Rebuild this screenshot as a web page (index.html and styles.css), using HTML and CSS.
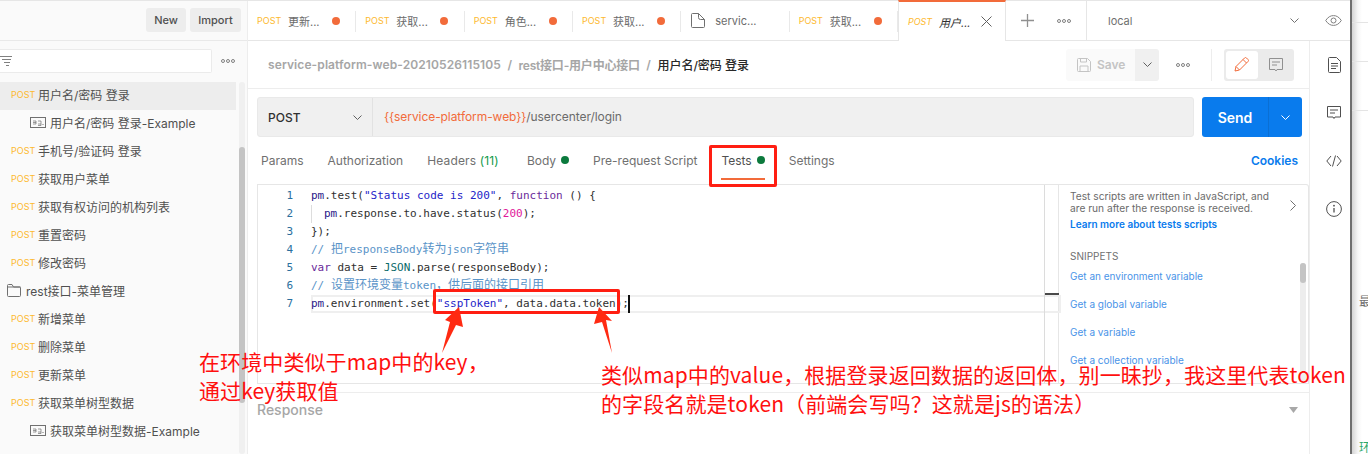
FILE: index.html
```html
<!DOCTYPE html>
<html lang="zh-CN">
<head>
<meta charset="utf-8">
<title>Postman</title>
<link rel="stylesheet" href="styles.css">
</head>
<body>
<div class="window">
  <div class="app">
    <aside class="sidebar">
      <div class="side-head">
        <button class="head-btn new">New</button>
        <button class="head-btn">Import</button>
      </div>
      <div class="side-filter">
        <div class="filter-box">
          <svg class="filter-icon" width="13" height="12" viewBox="0 0 13 12"><path d="M0 1.5h12M2 4.500h9M4 7.500h6M6 10.500h3" stroke="#808080" fill="none"/></svg>
        </div>
        <svg class="dots" width="14" height="4" viewBox="0 0 14 4"><circle cx="2" cy="2" r="1.500"/><circle cx="7" cy="2" r="1.500"/><circle cx="12" cy="2" r="1.500"/></svg>
      </div>
      <div class="side-body">
        <ul class="tree">
          <li class="row selected"><span class="verb">POST</span><span>用户名/密码 登录</span></li>
          <li class="row example"><svg class="eg" width="16" height="11" viewBox="0 0 16 11"><rect x=".5" y=".5" width="15" height="10" fill="none" stroke="#707070"/><path d="M3 5.500h3M3 4h3v3H3M8 4h3v3H8M11 7v1.500H8" stroke="#707070" fill="none" stroke-width=".7"/><rect x="12.500" y="7" width="1" height="1" fill="#707070"/></svg><span>用户名/密码 登录-Example</span></li>
          <li class="row"><span class="verb">POST</span><span>手机号/验证码 登录</span></li>
          <li class="row"><span class="verb">POST</span><span>获取用户菜单</span></li>
          <li class="row"><span class="verb">POST</span><span>获取有权访问的机构列表</span></li>
          <li class="row"><span class="verb">POST</span><span>重置密码</span></li>
          <li class="row"><span class="verb">POST</span><span>修改密码</span></li>
          <li class="row folder"><svg width="14" height="13" viewBox="0 0 14 13"><path d="M.5 3V1.500a1 1 0 0 1 1-1h3.500l1.500 2.500h6a1 1 0 0 1 1 1v7.500a1 1 0 0 1-1 1h-11a1 1 0 0 1-1-1V3h13" fill="none" stroke="#707070"/></svg><span>rest接口-菜单管理</span></li>
          <li class="row"><span class="verb">POST</span><span>新增菜单</span></li>
          <li class="row"><span class="verb">POST</span><span>删除菜单</span></li>
          <li class="row"><span class="verb">POST</span><span>更新菜单</span></li>
          <li class="row"><span class="verb">POST</span><span>获取菜单树型数据</span></li>
          <li class="row example"><svg class="eg" width="16" height="11" viewBox="0 0 16 11"><rect x=".5" y=".5" width="15" height="10" fill="none" stroke="#707070"/><path d="M3 5.500h3M3 4h3v3H3M8 4h3v3H8M11 7v1.500H8" stroke="#707070" fill="none" stroke-width=".7"/><rect x="12.500" y="7" width="1" height="1" fill="#707070"/></svg><span>获取菜单树型数据-Example</span></li>
        </ul>
        <div class="side-scroll"><div class="side-thumb"></div></div>
      </div>
    </aside>

    <main class="main">
      <nav class="tabs">
        <div class="tab"><span class="verb">POST</span><span class="tab-name">更新...</span><i class="dirty"></i></div>
        <div class="tab"><span class="verb">POST</span><span class="tab-name">获取...</span><i class="dirty"></i></div>
        <div class="tab"><span class="verb">POST</span><span class="tab-name">角色...</span><i class="dirty"></i></div>
        <div class="tab"><span class="verb">POST</span><span class="tab-name">获取...</span><i class="dirty"></i></div>
        <div class="tab"><svg class="doc-tab" width="14" height="15" viewBox="0 0 14 15"><path d="M.5 1.500a1 1 0 0 1 1-1h6l6 6v7a1 1 0 0 1-1 1h-11a1 1 0 0 1-1-1zM7.500.5v4a2 2 0 0 0 2 2h4" fill="none" stroke="#707070"/></svg><span class="tab-name doc-name">servic...</span></div>
        <div class="tab"><span class="verb">POST</span><span class="tab-name">获取...</span><i class="dirty"></i></div>
        <div class="tab active"><span class="verb">POST</span><span class="tab-name">用户...</span><svg class="tab-close" width="11" height="11" viewBox="0 0 11 11"><path d="M.5.5l10 10M10.500.5l-10 10" stroke="#606060" fill="none"/></svg></div>
        <div class="tab-add"><svg width="13" height="13" viewBox="0 0 13 13"><path d="M6.500 0v13M0 6.500h13" stroke="#909090" stroke-width="1.300" fill="none"/></svg><svg class="dots" width="14" height="4" viewBox="0 0 14 4"><circle cx="2" cy="2" r="1.500"/><circle cx="7" cy="2" r="1.500"/><circle cx="12" cy="2" r="1.500"/></svg></div>
        <div class="env"><span>local</span><svg width="9" height="5" viewBox="0 0 9 5"><path d="M.5.5l4 4 4-4" stroke="#707070" fill="none"/></svg></div>
        <div class="eye"><svg width="17" height="11" viewBox="0 0 17 11"><path d="M.7 5.500C3 2 5.500.6 8.500.6s5.500 1.400 7.800 4.900c-2.300 3.500-4.800 4.900-7.800 4.900S3 9 .7 5.500z" fill="none" stroke="#808080"/><circle cx="8.500" cy="5.500" r="2.500" fill="none" stroke="#808080"/></svg></div>
      </nav>

      <div class="workspace">
        <section class="content">
          <header class="crumbs">
            <div class="crumb-text"><span class="crumb-a">service-platform-web-20210526115105</span><span class="sep">/</span><span class="crumb-b">rest接口-用户中心接口</span><span class="sep">/</span><span class="current">用户名/密码 登录</span></div>
            <div class="save-group">
              <div class="save"><svg width="14" height="14" viewBox="0 0 14 14"><path d="M.5 1.500a1 1 0 0 1 1-1h9l3 3v9a1 1 0 0 1-1 1h-11a1 1 0 0 1-1-1zM3 13.500V8h8v5.500M3.500.5v3.500h6V.5" fill="none" stroke="#c4c4c4"/></svg><span>Save</span></div>
              <div class="save-more"><svg width="9" height="5" viewBox="0 0 9 5"><path d="M.5.5l4 4 4-4" stroke="#606060" fill="none"/></svg></div>
            </div>
            <svg class="dots crumb-dots" width="14" height="4" viewBox="0 0 14 4"><circle cx="2" cy="2" r="1.500"/><circle cx="7" cy="2" r="1.500"/><circle cx="12" cy="2" r="1.500"/></svg>
            <div class="mode">
              <div class="mode-btn on"><svg width="15" height="15" viewBox="0 0 15 15"><path d="M1 14l1-4.500L10.500 1a1.400 1.400 0 0 1 2 0l1.500 1.500a1.400 1.400 0 0 1 0 2L5.500 13zM2 9.500L5.500 13M9 2.500l3.500 3.500" fill="none" stroke="#f26b3a"/></svg></div>
              <div class="mode-btn"><svg width="14" height="14" viewBox="0 0 14 14"><path d="M.5.500h13v11H8l-1 1.500-1-1.500H.5zM3 4h8M3 7h5" fill="none" stroke="#909090"/></svg></div>
            </div>
          </header>

          <div class="url-row">
            <div class="url-box">
              <div class="method"><span>POST</span><svg width="9" height="5" viewBox="0 0 9 5"><path d="M.5.5l4 4 4-4" stroke="#606060" fill="none"/></svg></div>
              <div class="url"><span class="var">{{service-platform-web}}</span>/usercenter/login</div>
            </div>
            <div class="send"><span class="send-label">Send</span><span class="send-more"><svg width="9" height="5" viewBox="0 0 9 5"><path d="M.5.5l4 4 4-4" stroke="#fff" fill="none"/></svg></span></div>
          </div>

          <div class="req-tabs">
            <span class="rt">Params</span>
            <span class="rt">Authorization</span>
            <span class="rt rt-headers">Headers <em>(11)</em></span>
            <span class="rt">Body<i class="ok"></i></span>
            <span class="rt">Pre-request Script</span>
            <span class="rt rt-on">Tests<i class="ok"></i></span>
            <span class="rt">Settings</span>
            <span class="cookies">Cookies</span>
          </div>

          <div class="editor-wrap">
            <div class="editor">
              <div class="gutter"><span>1</span><span>2</span><span>3</span><span>4</span><span>5</span><span>6</span><span>7</span></div>
              <div class="code">
                <div class="ln"><b class="pm">pm</b>.test(<s class="str">"Status code is 200"</s>, <s class="kw">function</s> () {</div>
                <div class="ln in"><b class="pm">pm</b>.response.to.have.status(<s class="num">200</s>);</div>
                <div class="ln">});</div>
                <div class="ln cm">// <span class="zh">把</span>responseBody<span class="zh">转为</span>json<span class="zh">字符串</span></div>
                <div class="ln"><s class="kw">var</s> data = <s class="def">JSON</s>.parse(responseBody);</div>
                <div class="ln cm">// <span class="zh">设置环境变量</span>token<span class="zh">，供后面的接口引用</span></div>
                <div class="ln active"><b class="pm">pm</b>.environment.set(<s class="str">"sspToken"</s>, data.data.token);<i class="cursor"></i></div>
              </div>
              <div class="ruler"><i></i></div>
            </div>
            <aside class="help">
              <div class="help-top">
                <p>Test scripts are written in JavaScript, and are run after the response is received.</p>
                <svg width="6" height="11" viewBox="0 0 6 11"><path d="M.5.500l5 5-5 5" fill="none" stroke="#707070"/></svg>
              </div>
              <a class="learn">Learn more about tests scripts</a>
              <h4>SNIPPETS</h4>
              <div class="snips">
                <a>Get an environment variable</a>
                <a>Get a global variable</a>
                <a>Get a variable</a>
                <a>Get a collection variable</a>
                <a>Set an environment variable</a>
              </div>
              <div class="help-scroll"><div class="help-thumb"></div></div>
            </aside>
          </div>

          <div class="response"><span>Response</span><svg width="9" height="6" viewBox="0 0 9 6"><path d="M0 0h9L4.500 6z" fill="#a8a8a8"/></svg></div>
        </section>

        <aside class="rail">
          <svg width="13" height="16" viewBox="0 0 13 16"><path d="M.5 1.500a1 1 0 0 1 1-1h7l4 4v10a1 1 0 0 1-1 1h-10a1 1 0 0 1-1-1zM3 6.500h7M3 9h7M3 11.500h5" fill="none" stroke="#505050"/></svg>
          <svg width="14" height="14" viewBox="0 0 14 14"><path d="M.5.500h13v10.500H8l-1 1.500L6 11H.5zM3 4h8M3 7h5" fill="none" stroke="#505050"/></svg>
          <svg width="16" height="12" viewBox="0 0 16 12"><path d="M5 1L.8 6 5 11M11 1l4.200 5L11 11M9.500.5l-3 11" fill="none" stroke="#505050"/></svg>
          <svg width="16" height="16" viewBox="0 0 16 16"><circle cx="8" cy="8" r="7.400" fill="none" stroke="#505050"/><path d="M8 7v4.500" stroke="#505050" stroke-width="1.300"/><circle cx="8" cy="4.700" r=".9" fill="#505050"/></svg>
        </aside>
      </div>
    </main>
  </div>
  <div class="behind"><span class="b1">最</span><span class="b2">环</span></div>

  <div class="mark mark-tests"></div>
  <div class="mark mark-set"></div>
  <svg class="arrows" width="1368" height="454" viewBox="0 0 1368 454">
    <path d="M442 353L450 322 445 320 459 307 463 327 456 325z" fill="#ff2a12"/>
    <path d="M612 353L602 322 594 324 599 307 612 321 606 320z" fill="#ff2a12"/>
  </svg>
  <p class="note note-key">在环境中类似于map中的key，<br>通过key获取值</p>
  <p class="note note-value">类似map中的value，根据登录返回数据的返回体，别一昧抄，我这里代表token<br>的字段名就是token（前端会写吗？这就是js的语法）</p>
</div>
</body>
</html>
```
FILE: styles.css
```css
* { box-sizing: border-box; }
html, body { margin: 0; height: 454px; overflow: hidden; background: #fff; }
body { font-family: Inter, "Noto Sans CJK SC", sans-serif; font-size: 12px; color: #505050; }
ul, p, h4 { margin: 0; padding: 0; list-style: none; }
s, b, em, i { text-decoration: none; font-style: normal; font-weight: inherit; }

.window { position: relative; display: flex; width: 1368px; height: 454px; overflow: hidden; }
.app { display: flex; width: 1350px; height: 454px; border-top: 1px solid #e6e6e6; flex: none; }

.sidebar { width: 248px; flex: none; background: #fafafa; border-right: 1px solid #ededed; display: flex; flex-direction: column; }
.side-head { height: 40px; flex: none; display: flex; justify-content: flex-end; align-items: center; gap: 4px; padding: 0 6px 2px 0; border-bottom: 1px solid #e9e9e9; }
.head-btn { height: 24px; padding: 0 8px; border: 0; border-radius: 3px; background: #ededed; color: #505050; font: 500 11px Inter, sans-serif; }
.head-btn.new { width: 40px; }
.head-btn:not(.new) { width: 51px; }
.side-filter { height: 41px; flex: none; display: flex; align-items: center; gap: 9px; padding: 0 12px 1px 0; }
.filter-box { width: 213px; height: 24px; background: #fff; border: 1px solid #ebebeb; border-left: 0; border-radius: 0 2px 2px 0; display: flex; align-items: center; }
.dots { fill: none; stroke: #808080; flex: none; }
.dots circle { stroke-width: 1; }

.side-body { flex: 1; min-height: 0; display: flex; overflow: hidden; }
.tree { width: 236px; flex: none; }
.row { height: 28px; display: flex; align-items: center; padding: 0 0 3px 11px; white-space: nowrap; color: #505050; font-size: 12px; }
.row.selected { background: #ededed; }
.row.example { padding-left: 30px; gap: 4px; }
.row.folder { padding-left: 7px; gap: 5px; }
.verb { color: #fdb92e; font-size: 9px; width: 27px; flex: none; }
.side-scroll { width: 6px; margin-left: 3px; background: #f0f0f0; border-radius: 3px; }
.side-thumb { height: 256px; margin-top: 65px; background: #c4c4c4; border-radius: 3px; }

.main { flex: 1; min-width: 0; display: flex; flex-direction: column; }
.tabs { height: 40px; flex: none; display: flex; align-items: stretch; border-bottom: 1px solid #e6e6e6; }
.tab { width: 108.330px; flex: none; display: flex; align-items: center; padding-left: 9px; position: relative; font-size: 11px; background: #fff; }
.tab::after { content: ""; position: absolute; right: 0; top: 10px; height: 21px; width: 1px; background: #e9e9e9; }
.tab-name { width: 44px; color: #6b6b6b; white-space: nowrap; margin-left: 4px; }
.dirty { width: 8px; height: 8px; border-radius: 50%; background: #f26b3a; }
.doc-tab { margin-left: 1px; }
.doc-name { margin-left: 10px; width: 60px; }
.tab.active { width: 108px; margin-top: -1px; border-top: 2px solid #f26b3a; border-left: 1px solid #e6e6e6; border-right: 1px solid #e6e6e6; margin-bottom: -1px; background: #fff; }
.tab.active::after { display: none; }
.tab.active .tab-name { font-style: italic; color: #303030; width: 40px; }
.tab.active .verb { font-style: italic; }
.tab-close { margin-left: 2px; }
.tab-add { width: 81px; flex: none; display: flex; align-items: center; gap: 23px; padding-left: 15px; border-right: 1px solid #e6e6e6; }
.env { width: 222px; flex: none; display: flex; align-items: center; justify-content: space-between; padding: 0 10px 0 21px; font-size: 11px; color: #707070; }
.eye { flex: 1; display: flex; align-items: center; justify-content: center; padding-left: 9px; }

.workspace { flex: 1; min-height: 0; display: flex; }
.content { width: 1061px; flex: none; display: flex; flex-direction: column; overflow: hidden; }

.crumbs { height: 48px; flex: none; display: flex; align-items: center; padding-left: 20px; border-bottom: 1px solid #ededed; }
.crumb-text { width: 798px; flex: none; display: flex; align-items: center; gap: 6.500px; font-weight: 600; color: #a6a6a6; white-space: nowrap; }
.crumb-a { letter-spacing: .1px; }
.crumb-b { letter-spacing: -.2px; }
.crumb-text .current { color: #282828; font-weight: 500; }
.sep { color: #a6a6a6; }
.save-group { display: flex; height: 32px; border-radius: 3px; overflow: hidden; flex: none; }
.save { width: 69px; background: #fafafa; display: flex; align-items: center; gap: 6px; padding-left: 11px; color: #c4c4c4; font-weight: 600; }
.save-more { width: 24px; background: #f0f0f0; display: flex; align-items: center; justify-content: center; }
.crumb-dots { margin-left: 17px; }
.mode { margin-left: 34px; position: relative; display: flex; width: 70px; height: 32px; padding: 2px; gap: 3px; background: #ebebeb; border-radius: 3px; flex: none; }
.mode::before { content: ""; position: absolute; left: -13px; top: 0; height: 32px; width: 1px; background: #ededed; }
.mode-btn { width: 32px; display: flex; align-items: center; justify-content: center; border-radius: 3px; }
.mode-btn.on { background: #fff; }

.url-row { flex: none; display: flex; gap: 8px; padding: 8px 0 0 9px; }
.url-box { width: 937px; height: 40px; display: flex; background: #f0f0f0; border: 1px solid #e9e9e9; border-radius: 3px; flex: none; }
.method { width: 115px; display: flex; align-items: center; justify-content: space-between; padding: 0 10px 0 10px; border-right: 1px solid #e2e2e2; font-weight: 500; color: #303030; }
.url { display: flex; align-items: center; padding: 0 0 2px 11px; color: #6b6b6b; letter-spacing: -.07px; }
.var { color: #f26b3a; }
.send { width: 100px; height: 40px; flex: none; background: #097bed; border-radius: 3px; display: flex; color: #fff; font-weight: 600; font-size: 14px; }
.send-label { width: 67px; display: flex; align-items: center; justify-content: center; border-right: 1px solid #0a6fd4; }
.send-more { flex: 1; display: flex; align-items: center; justify-content: center; }

.req-tabs { flex: none; height: 40px; margin-top: 8px; display: flex; align-items: center; padding: 0 11px 10px 13px; gap: 24px; position: relative; color: #707070; white-space: nowrap; }
.rt { display: flex; align-items: center; gap: 0; white-space: pre; }
.rt em { color: #0f9a4a; }
.rt-headers { margin-right: 4px; letter-spacing: .15px; }
.ok { width: 8px; height: 8px; border-radius: 50%; background: #0c7a3d; margin-left: 5px; }
.rt-on { position: relative; color: #505050; }
.rt-on::after { content: ""; position: absolute; left: 0; right: 0; top: 25px; height: 2px; background: #f26b3a; }
.cookies { margin-left: auto; color: #097bed; font-weight: 600; }

.editor-wrap { flex: none; height: 200px; margin-left: 9px; display: flex; border-top: 1px solid #e6e6e6; border-right: 1px solid #e6e6e6; border-bottom: 1px solid #e6e6e6; border-radius: 0 3px 0 0; margin-top: -1px; width: 1052px; }
.editor { width: 802px; flex: none; display: flex; border-left: 1px solid #e6e6e6; border-right: 1px solid #e6e6e6; position: relative; font-family: "DejaVu Sans Mono", "Noto Sans CJK SC", monospace; font-size: 11px; }
.gutter { width: 53px; flex: none; display: flex; flex-direction: column; padding: 2px 18px 0 0; text-align: right; color: #2a6f9e; }
.gutter span { height: 18px; line-height: 18px; }
.code { width: 735px; flex: none; padding-top: 2px; color: #303030; }
.ln { height: 18px; line-height: 18px; white-space: pre; position: relative; }
.ln.in { padding-left: 13px; }
.ln.in::before { content: ""; position: absolute; left: 0; top: 0; height: 18px; width: 1px; background: #ddd; }
.pm { color: #2a1a8a; }
.str { color: #2424c8; }
.kw { color: #6a2a9a; }
.num { color: #e0189a; }
.def { color: #0a6a6a; }
.cm { color: #5a94c8; }
.zh { font-size: 12px; line-height: 1; }
.ln.active { width: 750px; box-shadow: inset 0 0 0 2px #efefef; }
.cursor { display: inline-block; width: 2px; height: 18px; background: #111; vertical-align: top; margin-left: -1px; }
.ruler { width: 14px; flex: none; border-left: 1px solid #dcdcdc; margin-left: -2px; position: relative; }
.ruler i { position: absolute; left: 0; right: -1px; top: 108px; height: 2px; background: #4a4a4a; }

.help { flex: 1; min-width: 0; padding: 5px 0 0 11px; position: relative; overflow: hidden; font-size: 10px; }
.help-top { display: flex; align-items: flex-start; justify-content: space-between; padding-right: 12px; }
.help-top p { width: 200px; line-height: 12px; font-size: 10.200px; color: #6b6b6b; }
.help-top svg { margin-top: 10px; }
.learn { display: block; margin-top: 3px; line-height: 14px; color: #097bed; font-weight: 600; }
.help h4 { margin-top: 18px; line-height: 14px; font-size: 10px; font-weight: 400; color: #707070; }
.snips { display: flex; flex-direction: column; gap: 14px; margin-top: 6px; }
.snips a { line-height: 14px; color: #4a94e8; white-space: nowrap; }
.help-scroll { position: absolute; right: 2px; top: 78px; bottom: 0; width: 6px; background: #ededed; border-radius: 3px; }
.help-thumb { height: 20px; background: #c4c4c4; border-radius: 3px; }

.response { flex: none; margin-top: 8px; height: 34px; padding: 0 11px 0 9px; border-top: 1px solid #ededed; display: flex; align-items: center; justify-content: space-between; color: #a6a6a6; font-size: 14px; font-weight: 500; }

.rail { flex: 1; border-left: 1px solid #ededed; display: grid; grid-auto-rows: 48px; place-items: center; align-content: start; padding-left: 8px; }

.behind { flex: 1; border-left: 2px solid #6e6e6e; background: linear-gradient(to bottom, transparent 22px, #e4e4e4 22px, #e4e4e4 23px, transparent 23px, transparent 61px, #e4e4e4 61px, #e4e4e4 62px, transparent 62px, transparent 110px, #e4e4e4 110px, #e4e4e4 111px, transparent 111px), linear-gradient(to right, #d4d4d4, #f6f6f6 6px, #fff 10px); position: relative; font-size: 12px; color: #707070; display: flex; flex-direction: column; overflow: hidden; }
.b1 { margin-top: 292px; margin-left: 7px; }
.b2 { margin-top: 129px; color: #2aa86a; margin-left: 7px; }

.mark { position: absolute; border: 3px solid #ff1e12; border-radius: 2px; }
.mark-tests { left: 709px; top: 145px; width: 68px; height: 42px; }
.mark-set { left: 433px; top: 289px; width: 187px; height: 25px; }
.arrows { position: absolute; left: 0; top: 0; pointer-events: none; }
.note { position: absolute; color: #ff0f0f; font-family: "Noto Sans CJK SC", sans-serif; font-size: 21px; line-height: 28.500px; letter-spacing: .1px; white-space: nowrap; }
.note-key { left: 199px; top: 347px; }
.note-value { left: 601px; top: 360px; }
```
